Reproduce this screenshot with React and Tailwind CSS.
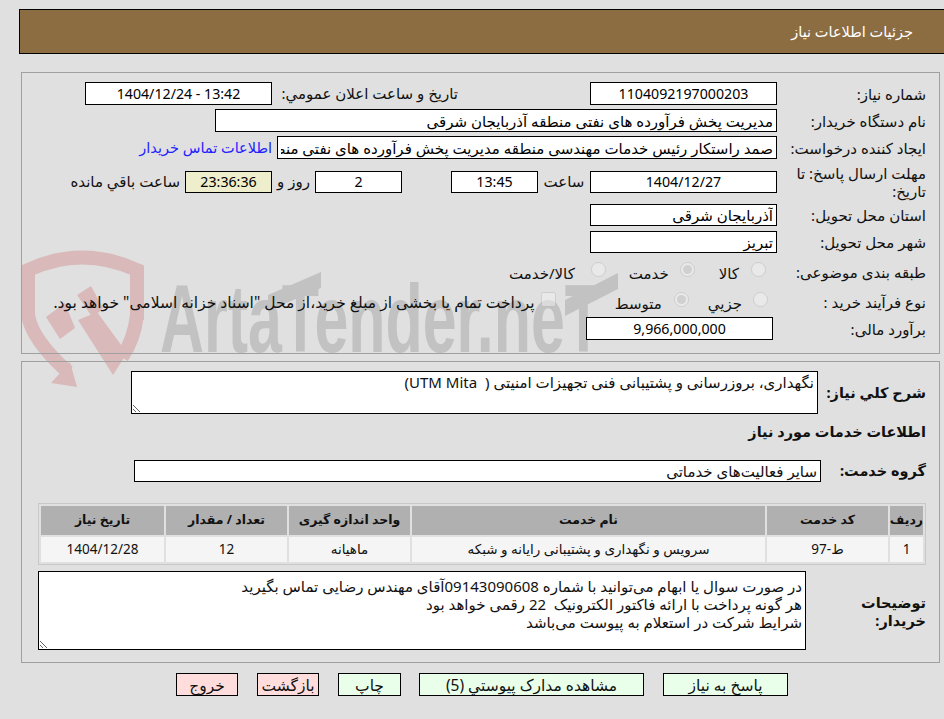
const inputCls = "border border-black bg-white px-[3px] text-black outline-none rounded-none";
const Box = ({ w, v, center, h = "h-[23px]", cls = "" }) => (
  <input readOnly value={v} dir={center ? "ltr" : "rtl"} className={`${inputCls} ${h} ${center ? "text-center text-[14.2px]" : "text-right"} ${w} ${cls}`} />
);
const Label = ({ children }) => <div className="w-[149px] shrink-0 leading-[18px]">{children}</div>;

function Watermark() {
  return (
    <svg className="absolute left-0 top-0 pointer-events-none" width="944" height="719" viewBox="0 0 944 719">
      <g fill="none" stroke="#d9b9b9" strokeWidth="14">
        <path d="M137 320 L137 270 Q82 245 28 270 L28 315 Q32 340 68 372" />
        <path d="M137 315 Q134 340 122 357" />
      </g>
      <g fill="#d9b9b9">
        <polygon points="70,362 77,387 51,383" />
        <polygon points="46,317 65,303 75,328 60,339" />
        <polygon points="77,295 91,286 103,308 93,318" />
        <polygon points="78,320 113,375 127,353 97,312" />
      </g>
      <text x="160" y="352" direction="ltr" textAnchor="start" fontFamily="Liberation Sans, sans-serif" fontWeight="700" fontSize="97" fill="#c2c2c2" textLength="442" lengthAdjust="spacingAndGlyphs">ArtaTender.neT</text>
      <polygon points="268,295 321,272 321,288 268,311" fill="#c2c2c2" />
      <polygon points="565,300 618,273 618,289 565,316" fill="#c2c2c2" />
    </svg>
  );
}

const Opt = ({ type = "radio", checked, mr, gap, label, w = "" }) => (
  <div className={`flex items-center ${mr}`}>
    <input type={type} disabled defaultChecked={checked} className={`w-[15px] h-[15px] m-0 -translate-y-[2px] opacity-70 ${gap}`} />
    <span className={`pt-[3px] ${w}`}>{label}</span>
  </div>
);

const rows = [["1", "ط-97", "سرویس و نگهداری و پشتیبانی رایانه و شبکه", "ماهیانه", "12", "1404/12/28"]];
const heads = ["رديف", "کد خدمت", "نام خدمت", "واحد اندازه گیری", "تعداد / مقدار", "تاریخ نیاز"];
const widths = ["w-[33px]", "w-[121px]", "w-[353px]", "w-[121px]", "w-[121px]", "w-[123px]"];

export default function App() {
  return (
    <div dir="rtl" className="relative w-[944px] h-[719px] overflow-hidden bg-[#e0e0e0] text-[15px] text-[#111] font-[family-name:'Noto_Sans','DejaVu_Sans',sans-serif]">
      <Watermark />
      <div className="relative pt-[9px]">
        <div className="ml-[19px] h-[45px] border-y border-l border-black bg-[#8c6d42] text-white text-[14.5px] flex items-center pr-[31px]">جزئیات اطلاعات نیاز</div>

        <div className="ml-[21px] mr-[4px] mt-[18px] h-[282px] border border-[#a0a0a0] pt-[9px] pr-[13px]">
          <div className="flex items-center h-[23px]">
            <Label>شماره نیاز:</Label>
            <Box w="w-[187px]" v="1104092197000203" center />
            <div className="w-[318px] pr-[132px]">تاریخ و ساعت اعلان عمومي:</div>
            <Box w="w-[187px]" v="1404/12/24 - 13:42" center />
          </div>
          <div className="flex items-center h-[23px] mt-[4px]">
            <Label>نام دستگاه خریدار:</Label>
            <Box w="w-[562px]" v="مدیریت پخش فرآورده های نفتی منطقه آذربایجان شرقی" />
          </div>
          <div className="flex items-center h-[23px] mt-[4px]">
            <Label>ایجاد کننده درخواست:</Label>
            <Box w="w-[500px]" v="صمد راستکار رئیس خدمات مهندسی منطقه مدیریت پخش فرآورده های نفتی منطقه آذربایجان شرقی" />
            <a className="mr-[5px] text-[#2222ff] text-[14.5px] whitespace-nowrap">اطلاعات تماس خریدار</a>
          </div>
          <div className="flex items-center h-[37px] mt-[4px]">
            <Label>مهلت ارسال پاسخ: تا تاریخ:</Label>
            <Box w="w-[187px]" h="h-[22px]" v="1404/12/27" center />
            <div className="w-[52px] text-center">ساعت</div>
            <Box w="w-[87px]" h="h-[22px]" v="13:45" center />
            <div className="w-[49px]" />
            <Box w="w-[87px]" h="h-[22px]" v="2" center />
            <div className="w-[43px] text-center">روز و</div>
            <Box w="w-[87px]" h="h-[22px]" v="23:36:36" center cls="!bg-[#eeeecc]" />
            <div className="mr-[5px] whitespace-nowrap">ساعت باقي مانده</div>
          </div>
          <div className="flex items-center h-[22px] mt-[4px]">
            <Label>استان محل تحویل:</Label>
            <Box w="w-[187px]" h="h-[22px]" v="آذربایجان شرقی" />
          </div>
          <div className="flex items-center h-[22px] mt-[5px]">
            <Label>شهر محل تحویل:</Label>
            <Box w="w-[187px]" h="h-[22px]" v="تبریز" />
          </div>
          <div className="flex items-center h-[23px] mt-[7px]">
            <Label>طبقه بندی موضوعی:</Label>
            <Opt mr="mr-[11px]" gap="ml-[12px]" label="کالا" />
            <Opt checked mr="mr-[24px]" gap="ml-[11px]" label="خدمت" />
            <Opt mr="mr-[23px]" gap="ml-[16px]" label="کالا/خدمت" />
          </div>
          <div className="flex items-center h-[23px] mt-[7px]">
            <Label>نوع فرآیند خرید :</Label>
            <Opt mr="mr-[9px]" gap="ml-[11px]" label="جزيي" />
            <Opt checked mr="mr-[19px]" gap="ml-[12px]" label="متوسط" />
            <Opt type="checkbox" mr="mr-[59px]" gap="ml-[6px]" w="text-[15.5px]" label='پرداخت تمام یا بخشی از مبلغ خرید،از محل "اسناد خزانه اسلامی" خواهد بود.' />
          </div>
          <div className="flex items-center h-[23px] mt-[4px]">
            <Label>برآورد مالی:</Label>
            <Box w="w-[187px] mr-[4px]" v="9,966,000,000" center />
          </div>
        </div>

        <div className="ml-[21px] mr-[4px] mt-[7px] h-[302px] border border-[#a0a0a0] pt-[9px] pr-[13px]">
          <div className="flex items-center h-[43px]">
            <div className="w-[108px] shrink-0 font-bold text-[14.5px]">شرح کلي نیاز:</div>
            <textarea readOnly defaultValue="نگهداری، بروزرسانی و پشتیبانی فنی تجهیزات امنیتی (  UTM Mita)" className="w-[687px] h-[43px] border border-black bg-white px-[3px] pt-[1px] leading-[18px] outline-none rounded-none" />
          </div>
          <div className="font-bold text-[14.5px] mt-[7px] h-[20px] leading-[20px]">اطلاعات خدمات مورد نیاز</div>
          <div className="flex items-center h-[22px] mt-[19px]">
            <div className="w-[105px] shrink-0 font-bold text-[14.5px]">گروه خدمت:</div>
            <input readOnly dir="rtl" value="سایر فعالیت‌های خدماتی" className="w-[687px] h-[22px] border border-black bg-white px-[3px] outline-none rounded-none" />
          </div>
          <table className="mt-[21px] w-[888px] table-fixed border border-[#c8c8c8] border-separate border-spacing-[2px] text-[13.5px]">
            <thead>
              <tr>{heads.map((h, i) => <th key={i} className={`${widths[i]} h-[29px] p-0 bg-[#b0b0b0] text-[12.5px] font-bold text-center`}>{h}</th>)}</tr>
            </thead>
            <tbody>
              {rows.map((r, k) => <tr key={k}>{r.map((c, i) => <td key={i} className="h-[25px] p-0 bg-[#f5f5f5] text-center">{c}</td>)}</tr>)}
            </tbody>
          </table>
          <div className="flex items-center mt-[6px]">
            <div className="w-[120px] shrink-0 font-bold text-[14.5px] leading-[18px] pl-[40px]">توضیحات خریدار:</div>
            <textarea readOnly defaultValue={"در صورت سوال یا ابهام می‌توانید با شماره 09143090608آقای مهندس رضایی تماس بگیرید\nهر گونه پرداخت با ارائه فاکتور الکترونیک  22 رقمی خواهد بود\nشرایط شرکت در استعلام به پیوست می‌باشد"} className="w-[768px] h-[79px] border border-black bg-white px-[3px] pt-[5px] leading-[18px] outline-none rounded-none" />
          </div>
        </div>

        <div className="flex mt-[10px] pr-[156px] text-[15.5px]">
          <button className="w-[125px] h-[23px] border border-black bg-[#eaffea]">پاسخ به نیاز</button>
          <button className="w-[225px] h-[23px] mr-[19px] border border-black bg-[#eaffea]">مشاهده مدارک پیوستي (5)</button>
          <button className="w-[63px] h-[23px] mr-[18px] border border-black bg-[#eaffea]">چاپ</button>
          <button className="w-[62px] h-[23px] mr-[19px] border border-black bg-[#ffdddd]">بازگشت</button>
          <button className="w-[62px] h-[23px] mr-[19px] border border-black bg-[#ffdddd]">خروج</button>
        </div>
      </div>
    </div>
  );
}
